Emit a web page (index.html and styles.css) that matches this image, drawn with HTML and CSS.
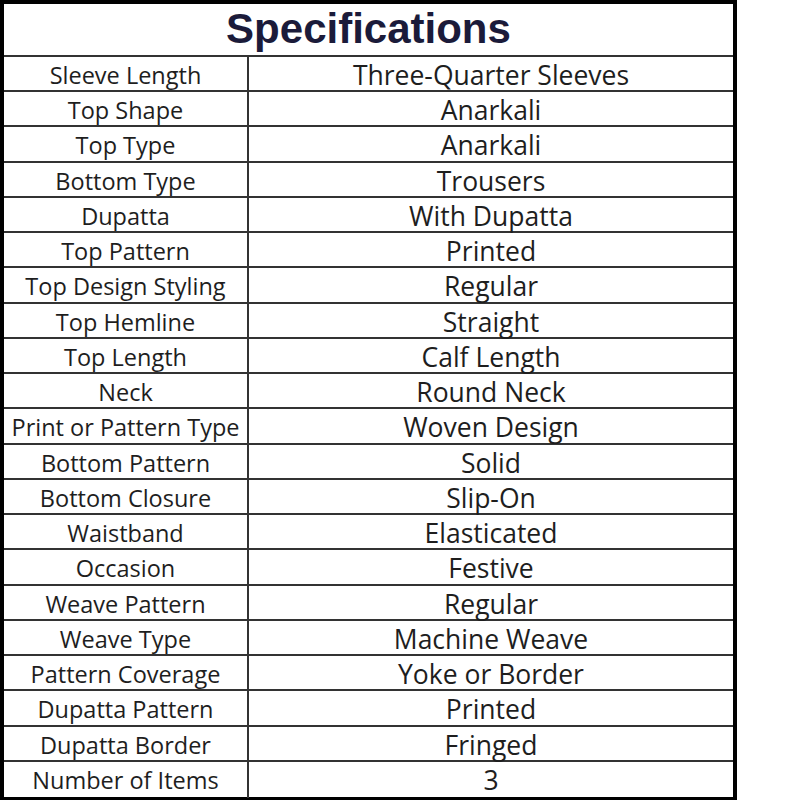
FILE: index.html
```html
<!DOCTYPE html>
<html>
<head>
<meta charset="utf-8">
<link rel="stylesheet" href="styles.css">
</head>
<body>
<div class="sheet">
  <div class="title">Specifications</div>
  <div class="row"><div class="key">Sleeve Length</div><div class="val">Three-Quarter Sleeves</div></div>
  <div class="row"><div class="key">Top Shape</div><div class="val">Anarkali</div></div>
  <div class="row"><div class="key">Top Type</div><div class="val">Anarkali</div></div>
  <div class="row"><div class="key">Bottom Type</div><div class="val">Trousers</div></div>
  <div class="row"><div class="key">Dupatta</div><div class="val">With Dupatta</div></div>
  <div class="row"><div class="key">Top Pattern</div><div class="val">Printed</div></div>
  <div class="row"><div class="key">Top Design Styling</div><div class="val">Regular</div></div>
  <div class="row"><div class="key">Top Hemline</div><div class="val">Straight</div></div>
  <div class="row"><div class="key">Top Length</div><div class="val">Calf Length</div></div>
  <div class="row"><div class="key">Neck</div><div class="val">Round Neck</div></div>
  <div class="row"><div class="key">Print or Pattern Type</div><div class="val">Woven Design</div></div>
  <div class="row"><div class="key">Bottom Pattern</div><div class="val">Solid</div></div>
  <div class="row"><div class="key">Bottom Closure</div><div class="val">Slip-On</div></div>
  <div class="row"><div class="key">Waistband</div><div class="val">Elasticated</div></div>
  <div class="row"><div class="key">Occasion</div><div class="val">Festive</div></div>
  <div class="row"><div class="key">Weave Pattern</div><div class="val">Regular</div></div>
  <div class="row"><div class="key">Weave Type</div><div class="val">Machine Weave</div></div>
  <div class="row"><div class="key">Pattern Coverage</div><div class="val">Yoke or Border</div></div>
  <div class="row"><div class="key">Dupatta Pattern</div><div class="val">Printed</div></div>
  <div class="row"><div class="key">Dupatta Border</div><div class="val">Fringed</div></div>
  <div class="row last"><div class="key">Number of Items</div><div class="val">3</div></div>
</div>
</body>
</html>
```
FILE: styles.css
```css
html, body {
  margin: 0;
  padding: 0;
  background: #fff;
}
.sheet {
  box-sizing: border-box;
  width: 737px;
  height: 800px;
  border-top: 4px solid #000;
  border-left: 4px solid #000;
  border-right: 4px solid #000;
  border-bottom: 3px solid #000;
  display: flex;
  flex-direction: column;
}
.title {
  height: 51px;
  border-bottom: 2px solid #333;
  font-family: "Liberation Sans", Arial, sans-serif;
  font-weight: bold;
  font-size: 42px;
  color: #1b1b3a;
  display: flex;
  align-items: center;
  justify-content: center;
}
.row {
  height: 35.25px;
  box-sizing: border-box;
  border-bottom: 2px solid #333;
  display: grid;
  grid-template-columns: 245px 1fr;
  font-family: "Open Sans", sans-serif;
  color: #1e1e1e;
}
.row.last {
  border-bottom: none;
}
.key, .val {
  display: flex;
  align-items: center;
  justify-content: center;
  white-space: nowrap;
}
.key {
  border-right: 2px solid #333;
  font-size: 23.5px;
}
.val {
  font-size: 26.5px;
}
```
